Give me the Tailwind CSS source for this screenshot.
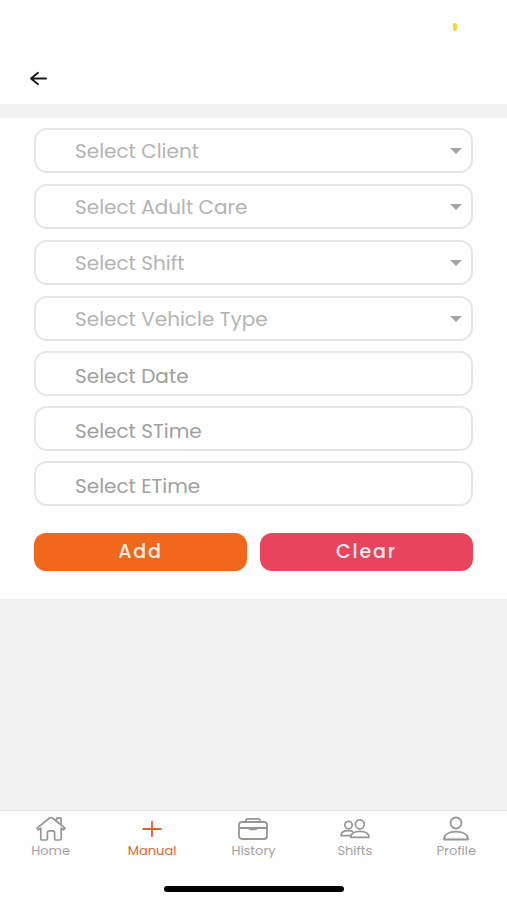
<!DOCTYPE html>
<html lang="en">

<head>
    <meta charset="UTF-8">
    <meta name="viewport" content="width=device-width, initial-scale=1.0">
    <title>Manual entry</title>
    <script src="https://cdn.jsdelivr.net/npm/@tailwindcss/browser@4"></script>
</head>

<body class="flex min-h-screen flex-col bg-[#f2f2f2] font-['Poppins','Inter',sans-serif]">

    <header class="bg-[#fefefe] px-7 pt-[22px] pb-[14px]">
        <!-- status bar -->
        <div class="flex h-[46px] justify-end pr-[22px]">
            <span class="mt-px h-2 w-1 rounded-sm bg-[#ead93c]"></span>
        </div>
        <button type="button" aria-label="Back" class="flex h-[22px] w-[22px] items-center justify-center">
            <svg class="h-[22px] w-[22px]" viewBox="0 0 22 22" fill="none" stroke="#1c1c1c" stroke-width="1.9"
                stroke-linecap="round" stroke-linejoin="round">
                <path d="M18 10.5H3M10 4.8 3 10.5l7 5.7" />
            </svg>
        </button>
    </header>

    <main class="mt-[14px] bg-[#fefefe] px-[34px] pt-[10px] pb-7">
        <form id="manualForm">
            <div class="grid gap-[11px]">
                <div class="relative">
                    <select aria-label="Client"
                        class="block h-[45px] w-full appearance-none rounded-[13px] border-2 border-[#e6e6e6] bg-white pr-10 pl-[39px] text-[20px] text-[#b4b4b4] outline-none">
                        <option>Select Client</option>
                    </select>
                    <svg class="pointer-events-none absolute top-5 right-[11px] h-[6px] w-3" viewBox="0 0 12 6" fill="#a3a3a3"><path d="M0 0h12L6 6z" /></svg>
                </div>
                <div class="relative">
                    <select aria-label="Adult care"
                        class="block h-[45px] w-full appearance-none rounded-[13px] border-2 border-[#e6e6e6] bg-white pr-10 pl-[39px] text-[20px] text-[#b4b4b4] outline-none">
                        <option>Select Adult Care</option>
                    </select>
                    <svg class="pointer-events-none absolute top-5 right-[11px] h-[6px] w-3" viewBox="0 0 12 6" fill="#a3a3a3"><path d="M0 0h12L6 6z" /></svg>
                </div>
                <div class="relative">
                    <select aria-label="Shift"
                        class="block h-[45px] w-full appearance-none rounded-[13px] border-2 border-[#e6e6e6] bg-white pr-10 pl-[39px] text-[20px] text-[#b4b4b4] outline-none">
                        <option>Select Shift</option>
                    </select>
                    <svg class="pointer-events-none absolute top-5 right-[11px] h-[6px] w-3" viewBox="0 0 12 6" fill="#a3a3a3"><path d="M0 0h12L6 6z" /></svg>
                </div>
                <div class="relative">
                    <select aria-label="Vehicle type"
                        class="block h-[45px] w-full appearance-none rounded-[13px] border-2 border-[#e6e6e6] bg-white pr-10 pl-[39px] text-[20px] text-[#b4b4b4] outline-none">
                        <option>Select Vehicle Type</option>
                    </select>
                    <svg class="pointer-events-none absolute top-5 right-[11px] h-[6px] w-3" viewBox="0 0 12 6" fill="#a3a3a3"><path d="M0 0h12L6 6z" /></svg>
                </div>
            </div>

            <div class="mt-[10px] grid gap-[10px]">
                <input type="text" aria-label="Date" placeholder="Select Date"
                    class="block h-[45px] w-full rounded-[13px] border-2 border-[#e6e6e6] bg-white pt-1 pr-4 pl-[39px] text-[20px] outline-none placeholder:text-[#a0a0a0]">
                <input type="text" aria-label="Start time" placeholder="Select STime"
                    class="block h-[45px] w-full rounded-[13px] border-2 border-[#e6e6e6] bg-white pt-1 pr-4 pl-[39px] text-[20px] outline-none placeholder:text-[#a0a0a0]">
                <input type="text" aria-label="End time" placeholder="Select ETime"
                    class="block h-[45px] w-full rounded-[13px] border-2 border-[#e6e6e6] bg-white pt-1 pr-4 pl-[39px] text-[20px] outline-none placeholder:text-[#a0a0a0]">
            </div>

            <div class="mt-[27px] grid grid-cols-2 gap-[13px]">
                <button type="submit" class="h-[38px] rounded-xl bg-[#f1671c] text-[19px] font-medium tracking-widest text-[#fff0e2]">Add</button>
                <button type="reset" class="h-[38px] rounded-xl bg-[#e9445d] text-[19px] font-medium tracking-widest text-[#ffe9ec]">Clear</button>
            </div>
        </form>
    </main>

    <nav class="mt-auto border-t border-[#e6e6e6] bg-[#fefefe] pt-1">
        <div class="grid grid-cols-5 text-[13px] leading-4 text-[#a2a2a2]">
            <a href="#" class="flex flex-col items-center">
                <svg class="h-7 w-8" viewBox="0 0 32 28" fill="none" stroke="#969696" stroke-width="1.7" stroke-linejoin="round" stroke-linecap="round">
                    <path d="M2 13.2 14.6 3q1.4-1 2.8 0L30 13.2l-1.5 1.6-2.3-1.7v10.3q0 1.6-1.6 1.6h-3.8q-1.2 0-1.2-1.4v-6q0-1.7-1.7-1.7h-3.8q-1.7 0-1.7 1.7v6q0 1.4-1.2 1.4H7.4q-1.6 0-1.6-1.6V13.1l-2.3 1.7z" />
                    <path d="M21.5 6V3.2H26v6.3" />
                </svg>
                Home
            </a>
            <a href="#" aria-current="page" class="flex flex-col items-center text-[#e0622f]">
                <svg class="h-7 w-8" viewBox="0 0 32 28" fill="none" stroke="#e0622f" stroke-width="1.8">
                    <path d="M6.5 14h19M16 6v16" />
                </svg>
                Manual
            </a>
            <a href="#" class="flex flex-col items-center">
                <svg class="h-7 w-8" viewBox="0 0 32 28" fill="none" stroke="#969696" stroke-width="1.8" stroke-linejoin="round">
                    <rect x="2" y="7" width="28" height="17" rx="3" />
                    <path d="M9 7V5.5Q9 3.800 11 3.800h10q2 0 2 1.700V7M2 13h28" />
                    <path d="M11.500 13.500h9q0 1.800-2 1.800h-5q-2 0-2-1.800z" fill="#969696" stroke="none" />
                </svg>
                History
            </a>
            <a href="#" class="flex flex-col items-center">
                <svg class="h-7 w-8" viewBox="0 0 32 28" fill="none" stroke="#969696" stroke-width="1.7" stroke-linejoin="round" stroke-linecap="round">
                    <circle cx="9.5" cy="10" r="3.7" />
                    <circle cx="20.8" cy="9.3" r="4.5" />
                    <path d="M11.8 22.3c0-4 4-6 9-6s9.2 2 9.2 6z" />
                    <path d="M10.8 20.6H2c0-3.2 3.2-4.9 7.5-4.9q2.5 0 4.2.8" />
                </svg>
                Shifts
            </a>
            <a href="#" class="flex flex-col items-center">
                <svg class="h-7 w-8" viewBox="0 0 32 28" fill="none" stroke="#969696" stroke-width="1.8" stroke-linejoin="round">
                    <circle cx="16" cy="8" r="5.5" />
                    <path d="M4 24.5c0-5.2 5.2-7.800 12-7.800s12 2.600 12 7.800z" />
                </svg>
                Profile
            </a>
        </div>
        <!-- home indicator -->
        <div class="mx-auto mt-[27px] mb-[8px] h-[6px] w-[180px] rounded-full bg-black"></div>
    </nav>

</body>

</html>
